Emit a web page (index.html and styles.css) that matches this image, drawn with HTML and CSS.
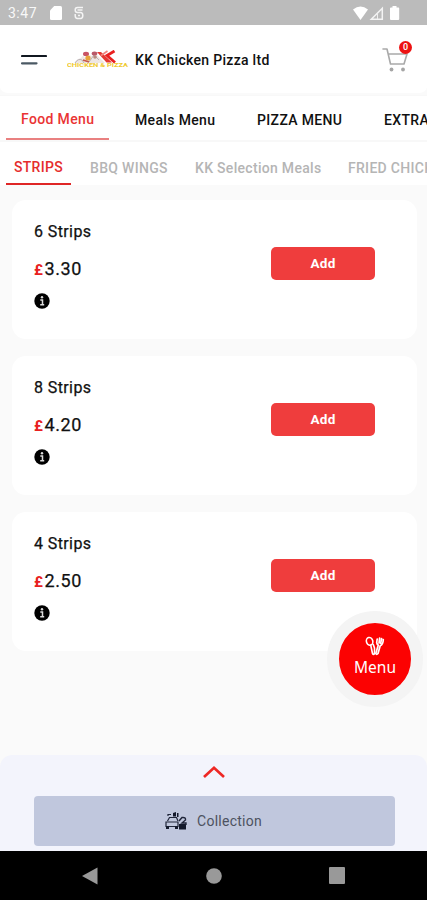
FILE: index.html
```html
<!DOCTYPE html>
<html lang="en">
<head>
<meta charset="utf-8">
<title>KK Chicken Pizza ltd</title>
<link rel="stylesheet" href="styles.css">
</head>
<body>
<div class="status">
  <span class="time">3:47</span>
  <svg class="sd" width="12" height="14" viewBox="0 0 12 14"><path d="M4.2 0H10.500Q12 0 12 1.500V12.500Q12 14 10.500 14H1.500Q0 14 0 12.500V4.500Z" fill="#fff"/></svg>
  <svg class="sync" width="10" height="14" viewBox="0 0 10 14"><path d="M9 1.500H3.500Q1.200 1.500 1.200 4T3.500 6.500H6.500Q8.800 6.500 8.800 9.500T6.500 12.500H3.500Q1.200 12.500 1.200 9.500V8M3.500 4H8.500M4 9.500H6" fill="none" stroke="#f4f4f4" stroke-width="1.500"/></svg>
  <svg class="signals" width="48" height="15" viewBox="0 0 48 15"><path d="M0 3.500Q7.500-2.500 15 3.500L7.500 14Z" fill="#fff"/><path d="M18.300 13.200H29.300V2.200Z" fill="none" stroke="#f4f4f4" stroke-width="1.500"/><path d="M24.500 8V13" stroke="#eee"/><path d="M39.500 0H43.500V1.500H45.500Q46.200 1.500 46.200 2.500V13Q46.200 14 45.200 14H38Q37 14 37 13V2.500Q37 1.500 38 1.500H39.500Z" fill="#fff"/></svg>
</div>
<header class="header">
  <svg class="burger" width="26" height="12" viewBox="0 0 26 12"><path d="M1 2H25" stroke="#111820" stroke-width="2.200" stroke-linecap="round"/><path d="M1 9.300H15.500" stroke="#4b5964" stroke-width="2.200" stroke-linecap="round"/></svg>
  <svg class="logo" width="62" height="19" viewBox="0 0 62 19">
    <path d="M8 13Q9 9 14 8Q16 4 18 8Q21 4 25 6Q29 3 32 7L38 13Z" fill="#eee6e3"/>
    <path d="M8 13Q11 8 15 10L17 13M22 12L27 5L32 10" fill="none" stroke="#bab3b5" stroke-width="1"/>
    <ellipse cx="19" cy="4" rx="3" ry="2.200" fill="#c85365"/><ellipse cx="27.500" cy="3.500" rx="2.800" ry="2" fill="#b95868"/>
    <circle cx="21" cy="8" r="2.600" fill="#e8a33b"/><circle cx="28" cy="7" r="1.800" fill="#b98b80"/><path d="M16 10L22 12" stroke="#c8574b" stroke-width="1.500"/>
    <path d="M30 2H34L45 12.500H39.500Z" fill="#e33832"/>
    <path d="M40.500 1L34 5.500" stroke="#ef8580" stroke-width="1.700"/>
    <path d="M47.500 1L40 5.500L48 12.500" fill="none" stroke="#e92020" stroke-width="2.800"/>
    <text x="0" y="17.400" class="logotext" textLength="61" lengthAdjust="spacingAndGlyphs">CHICKEN &amp; PIZZA</text>
  </svg>
  <h1>KK Chicken Pizza ltd</h1>
  <div class="cart">
    <svg width="26" height="26" viewBox="0 0 26 26"><path d="M1 2H5L8.500 17H22L25 7H6.200" fill="none" stroke="#a9a9a9" stroke-width="1.600" stroke-linejoin="round" stroke-linecap="round"/><circle cx="9.500" cy="22.500" r="1.900" fill="#a5a5a5"/><circle cx="21" cy="22.500" r="1.900" fill="#a5a5a5"/></svg>
    <span class="badge">0</span>
  </div>
</header>
<nav class="tabs">
  <span class="tab active t1">Food Menu</span><span class="tab t2">Meals Menu</span><span class="tab t3">PIZZA MENU</span><span class="tab t4">EXTRAS</span>
</nav>
<nav class="subtabs">
  <span class="sub active s1">STRIPS</span><span class="sub s2">BBQ WINGS</span><span class="sub s3">KK Selection Meals</span><span class="sub s4">FRIED CHICKEN</span>
</nav>
<main class="list">
  <article class="card"><div class="info"><h2>6 Strips</h2><p class="price"><b>£</b>3.30</p><svg width="16" height="16" viewBox="0 0 16 16"><circle cx="8" cy="8" r="7.700"/><path d="M6.300 7H8.500V11.500M6.200 11.700H10.200" fill="none" stroke="#ddd" stroke-width="1.500"/><circle cx="8" cy="4.300" r="1.200" fill="#ddd"/></svg></div><button class="add">Add</button></article>
  <article class="card"><div class="info"><h2>8 Strips</h2><p class="price"><b>£</b>4.20</p><svg width="16" height="16" viewBox="0 0 16 16"><circle cx="8" cy="8" r="7.700"/><path d="M6.300 7H8.500V11.500M6.200 11.700H10.200" fill="none" stroke="#ddd" stroke-width="1.500"/><circle cx="8" cy="4.300" r="1.200" fill="#ddd"/></svg></div><button class="add">Add</button></article>
  <article class="card"><div class="info"><h2>4 Strips</h2><p class="price"><b>£</b>2.50</p><svg width="16" height="16" viewBox="0 0 16 16"><circle cx="8" cy="8" r="7.700"/><path d="M6.300 7H8.500V11.500M6.200 11.700H10.200" fill="none" stroke="#ddd" stroke-width="1.500"/><circle cx="8" cy="4.300" r="1.200" fill="#ddd"/></svg></div><button class="add">Add</button></article>
</main>
<div class="fab">
  <svg width="20" height="20" viewBox="0 0 20 20" fill="none" stroke="#fff" stroke-width="1.600" stroke-linecap="round" stroke-linejoin="round"><ellipse cx="4.600" cy="5.300" rx="3.200" ry="3.900" transform="rotate(-15 4.600 5.300)"/><path d="M5.800 9.500L7.500 17.500Q8.500 19.200 9.500 17.500V12L8.300 8.500"/><path d="M12.200 3L11.700 6.500Q12 8.500 13.300 9L10.800 17.500Q11.500 19.200 13 17.500L15.200 9.800Q18 9 18.300 3.500M14.600 2L14 7M16.600 2.500L15.600 7.500" stroke-width="1.700"/></svg>
  <span>Menu</span>
</div>
<footer class="sheet">
  <svg class="chevron" width="24" height="14" viewBox="0 0 24 14"><path d="M2 12L12 2.800L22 12" fill="none" stroke="#ee2724" stroke-width="2.700"/></svg>
  <div class="collection">
    <svg width="22" height="18" viewBox="0 0 22 18"><path d="M2.500 9L4.500 5.500H11.500L13 9M1 10H13V14.500H1ZM3 4V2.500H6" fill="none" stroke="#20263a" stroke-width="1.200"/><path d="M1 14H4V17H1ZM10 14H13V17H10ZM8 1L11 0V4.500H8ZM12 1H13.500V5H12ZM14 12H21V17.500H14Z" fill="#141a2c"/><path d="M14 9L17 5.500Q21 5 20.500 8L17 11H21V13" fill="none" stroke="#20263a" stroke-width="1.400"/></svg>
    <span>Collection</span>
  </div>
</footer>
<div class="android">
  <svg width="16" height="18" viewBox="0 0 16 18"><path d="M0 9L15.500 0.500V17.500Z" fill="#999"/></svg>
  <svg width="16" height="16" viewBox="0 0 16 16"><circle cx="8" cy="8" r="7.800" fill="#999"/></svg>
  <svg width="16" height="17" viewBox="0 0 16 17"><rect width="16" height="17" rx="1" fill="#999"/></svg>
</div>
</body>
</html>
```
FILE: styles.css
```css
* { box-sizing: border-box; }
body {
  margin: 0;
  width: 427px;
  height: 900px;
  overflow: hidden;
  background: #fafafa;
  font-family: Roboto, sans-serif;
  color: #111;
  display: flex;
  flex-direction: column;
}
svg { display: block; flex: none; }
h1, h2, p { margin: 0; font-weight: 500; }
.status {
  height: 25px;
  flex: none;
  background: #bbb;
  display: flex;
  align-items: center;
  padding: 1px 24px 0 8px;
}
.time { width: 42px; color: #f8f8f8; font-size: 14px; letter-spacing: 0.5px; }
.sync { margin-left: 12px; }
.signals { margin-left: auto; margin-right: 2px; }
.header {
  height: 70px;
  flex: none;
  background: #fff;
  display: flex;
  align-items: center;
  padding: 2px 14px 0 21px;
  border-bottom: 2px solid #fafafa;
  border-radius: 0 0 8px 8px;
}
.logo { margin-left: 20px; margin-top: -2px; }
.logotext { font: 700 4.5px Roboto, sans-serif; fill: #efc92e; }
.header h1 { margin-left: 6px; font-size: 14px; letter-spacing: 0.3px; white-space: nowrap; }
.cart { position: relative; margin-left: auto; width: 31px; height: 26px; }
.badge {
  position: absolute;
  left: 17px;
  top: -6px;
  width: 13px;
  height: 13px;
  border-radius: 50%;
  background: #ed1212;
  color: #fff;
  font-size: 9px;
  font-weight: 500;
  line-height: 13px;
  text-align: center;
}
.tabs, .subtabs { display: flex; flex: none; background: #fff; overflow: hidden; white-space: nowrap; padding-left: 6px; }
.tabs { height: 47px; border-top: 1px solid #f8f8f8; border-bottom: 2px solid #f8f8f8; }
.tab { flex: none; font-size: 14px; font-weight: 500; line-height: 48px; letter-spacing: 0.35px; }
.tab.active { color: #ea3434; line-height: 46px; border-bottom: 3px solid #e98080; height: 45px; padding-left: 15px; }
.t1 { width: 103px; }
.t2 { width: 148px; padding-left: 26px; }
.t3 { width: 127px; }
.subtabs { height: 43px; }
.sub { flex: none; font-size: 14px; font-weight: 500; line-height: 53px; color: #b5b5b5; letter-spacing: 0.3px; }
.sub.active { color: #e52d2d; line-height: 51px; height: 43px; padding-left: 8px; border-bottom: 2px solid #df2626; }
.s1 { width: 65px; }
.s2 { width: 124px; padding-left: 19px; }
.s3 { width: 153px; }
.list { flex: 1; padding: 15px 10px 0 12px; display: flex; flex-direction: column; gap: 17px; }
.card {
  height: 139px;
  flex: none;
  background: #fff;
  border-radius: 14px;
  padding: 21px 42px 0 22px;
  display: flex;
  justify-content: space-between;
}
.card h2 { font-size: 16px; line-height: 22px; letter-spacing: 0.4px; font-weight: 400; -webkit-text-stroke: 0.25px #111; }
.price { margin-top: 15px; font-size: 18px; line-height: 22px; font-weight: 400; letter-spacing: 0.6px; -webkit-text-stroke: 0.25px #111; }
.price b { color: #e82020; font-size: 15px; font-weight: 700; -webkit-text-stroke: 0; margin-right: 1px; }
.info svg { margin-top: 12px; }
.add {
  width: 104px;
  height: 33px;
  margin-top: 26px;
  padding-bottom: 3px;
  border: 0;
  border-radius: 5px;
  background: #ef3d3d;
  color: #fff;
  font: 700 13.5px Roboto, sans-serif;
  letter-spacing: 0.3px;
}
.fab {
  position: absolute;
  left: 327px;
  top: 611px;
  width: 96px;
  height: 96px;
  border: 12px solid #f4f4f4;
  border-radius: 50%;
  background: #fc0202;
  color: #fff;
  display: flex;
  flex-direction: column;
  align-items: center;
  padding-top: 13px;
  font: 15.5px/23px "Noto Sans", sans-serif;
}
.sheet {
  height: 96px;
  flex: none;
  background: #f3f4fc;
  border-radius: 12px 12px 0 0;
  padding: 10px 32px 0 34px;
  display: flex;
  flex-direction: column;
  align-items: center;
}
.chevron { margin-right: 1px; }
.collection {
  margin-top: 17px;
  width: 361px;
  height: 50px;
  border-radius: 4px;
  background: #c0c7dd;
  color: #4d5260;
  display: flex;
  align-items: center;
  justify-content: center;
  gap: 10px;
  padding-right: 2px;
  font-size: 14px;
  letter-spacing: 0.25px;
}
.android {
  height: 49px;
  flex: none;
  background: #000;
  display: flex;
  align-items: center;
  justify-content: space-between;
  padding: 0 82px 0 82px;
}
```
